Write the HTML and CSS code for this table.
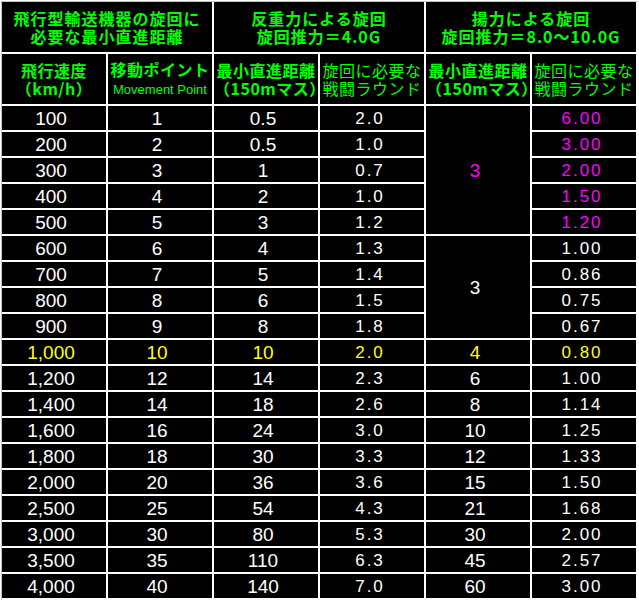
FILE: index.html
```html
<!DOCTYPE html>
<html lang="ja">
<head>
<meta charset="utf-8">
<title>飛行型輸送機器の旋回に必要な最小直進距離</title>
<link rel="stylesheet" href="styles.css">
</head>
<body>
<table class="turn-table">
  <colgroup>
    <col class="c"><col class="c"><col class="c"><col class="c"><col class="c"><col class="c">
  </colgroup>
  <thead>
    <tr class="head1">
      <th colspan="2">飛行型輸送機器の旋回に<br>必要な最小直進距離</th>
      <th colspan="2">反重力による旋回<br>旋回推力＝4.0G</th>
      <th colspan="2">揚力による旋回<br>旋回推力＝8.0〜10.0G</th>
    </tr>
    <tr class="head2">
      <th>飛行速度<br>（km/h）</th>
      <th>移動ポイント<br><span class="sub">Movement Point</span></th>
      <th>最小直進距離<br>（150mマス）</th>
      <th class="light">旋回に必要な<br>戦闘ラウンド</th>
      <th>最小直進距離<br>（150mマス）</th>
      <th class="light">旋回に必要な<br>戦闘ラウンド</th>
    </tr>
  </thead>
  <tbody>
    <tr><td>100</td><td>1</td><td>0.5</td><td class="thin">2.0</td><td rowspan="5" class="mag">3</td><td class="thin mag">6.00</td></tr>
    <tr><td>200</td><td>2</td><td>0.5</td><td class="thin">1.0</td><td class="thin mag">3.00</td></tr>
    <tr><td>300</td><td>3</td><td>1</td><td class="thin">0.7</td><td class="thin mag">2.00</td></tr>
    <tr><td>400</td><td>4</td><td>2</td><td class="thin">1.0</td><td class="thin mag">1.50</td></tr>
    <tr><td>500</td><td>5</td><td>3</td><td class="thin">1.2</td><td class="thin mag">1.20</td></tr>
    <tr><td>600</td><td>6</td><td>4</td><td class="thin">1.3</td><td rowspan="4">3</td><td class="thin">1.00</td></tr>
    <tr><td>700</td><td>7</td><td>5</td><td class="thin">1.4</td><td class="thin">0.86</td></tr>
    <tr><td>800</td><td>8</td><td>6</td><td class="thin">1.5</td><td class="thin">0.75</td></tr>
    <tr><td>900</td><td>9</td><td>8</td><td class="thin">1.8</td><td class="thin">0.67</td></tr>
    <tr class="yel"><td>1,000</td><td>10</td><td>10</td><td class="thin">2.0</td><td>4</td><td class="thin">0.80</td></tr>
    <tr><td>1,200</td><td>12</td><td>14</td><td class="thin">2.3</td><td>6</td><td class="thin">1.00</td></tr>
    <tr><td>1,400</td><td>14</td><td>18</td><td class="thin">2.6</td><td>8</td><td class="thin">1.14</td></tr>
    <tr><td>1,600</td><td>16</td><td>24</td><td class="thin">3.0</td><td>10</td><td class="thin">1.25</td></tr>
    <tr><td>1,800</td><td>18</td><td>30</td><td class="thin">3.3</td><td>12</td><td class="thin">1.33</td></tr>
    <tr><td>2,000</td><td>20</td><td>36</td><td class="thin">3.6</td><td>15</td><td class="thin">1.50</td></tr>
    <tr><td>2,500</td><td>25</td><td>54</td><td class="thin">4.3</td><td>21</td><td class="thin">1.68</td></tr>
    <tr><td>3,000</td><td>30</td><td>80</td><td class="thin">5.3</td><td>30</td><td class="thin">2.00</td></tr>
    <tr><td>3,500</td><td>35</td><td>110</td><td class="thin">6.3</td><td>45</td><td class="thin">2.57</td></tr>
    <tr><td>4,000</td><td>40</td><td>140</td><td class="thin">7.0</td><td>60</td><td class="thin">3.00</td></tr>
  </tbody>
</table>
</body>
</html>
```

FILE: styles.css
```css
html, body {
  margin: 0;
  padding: 0;
  background: #ffffff;
}

.turn-table {
  width: 638px;
  table-layout: fixed;
  border-collapse: separate;
  border-spacing: 2px;
  background:
    linear-gradient(#c4c4c4, #c4c4c4) 1px 1px / 100% 1px no-repeat,
    linear-gradient(#c4c4c4, #c4c4c4) 1px 1px / 1px 100% no-repeat,
    #ffffff;
}

.turn-table col.c {
  width: 104px;
}

.turn-table th,
.turn-table td {
  background: #000000;
  padding: 0;
  text-align: center;
  vertical-align: middle;
}

.turn-table th {
  height: 50px;
  color: #00ff00;
  font-family: "Noto Sans CJK JP", "Noto Sans", sans-serif;
  font-size: 16px;
  font-weight: 700;
  line-height: 18px;
  letter-spacing: 0.5px;
}

.head1 th {
  letter-spacing: 1px;
}

.turn-table th.light {
  font-weight: 400;
}

.sub {
  font-family: "Liberation Sans", Arial, sans-serif;
  font-size: 13px;
  font-weight: 400;
  letter-spacing: 0;
}

.turn-table td {
  color: #ffffff;
  font-family: "Liberation Sans", Arial, sans-serif;
  font-size: 19px;
  line-height: 22px;
  height: 22px;
  padding: 2px 6px 0 0;
}

.turn-table td.thin {
  font-size: 17px;
  letter-spacing: 2px;
  padding-right: 4px;
}

.turn-table td.mag {
  color: #ff00ff;
}

.turn-table tr.yel td {
  color: #ffff00;
}
```
